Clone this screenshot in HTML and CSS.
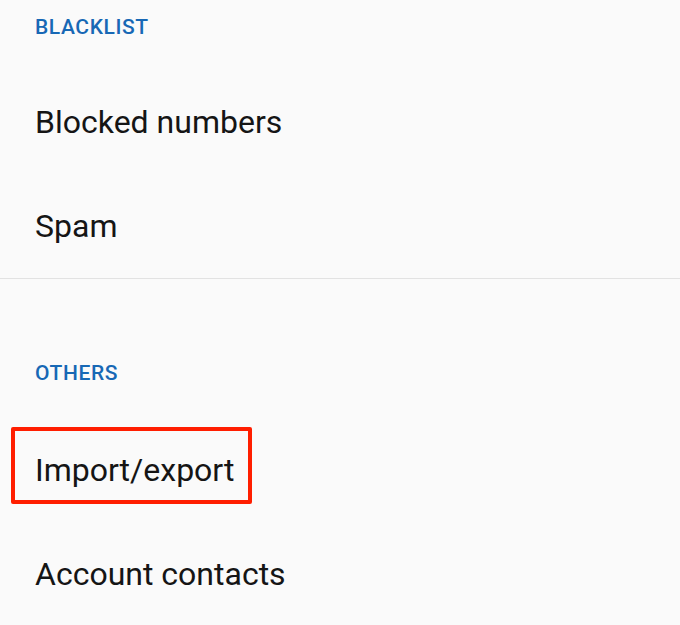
FILE: index.html
```html
<!DOCTYPE html>
<html>
	<head>
		<meta charset="UTF-8">
		<title>Contacts settings</title>
		<link rel="stylesheet" href="styles.css">
	</head>
	<body>
		<div class="section">
			<div class="section_title first">BLACKLIST</div>
			<div class="item">Blocked numbers</div>
			<div class="item">Spam</div>
		</div>
		<div class="section section_next">
			<div class="section_title">OTHERS</div>
			<div class="item marked">Import/export</div>
			<div class="item">Account contacts</div>
		</div>
	</body>
</html>
```

FILE: styles.css
```css
body {
	margin: 0;
	background-color: #fafafa;
	font-family: Roboto, "Noto Sans", sans-serif;
	overflow: hidden;
}

.section {
	border-bottom: 1px solid #e2e2e2;
}

.section_next {
	padding-top: 69px;
	border-bottom: none;
}

.section_title {
	padding-left: 35px;
	height: 50px;
	line-height: 50px;
	margin-bottom: 20px;
	font-size: 21px;
	font-weight: 500;
	letter-spacing: 0.6px;
	color: #1768b5;
}

.first {
	margin-top: 2px;
	margin-bottom: 18px;
}

.item {
	position: relative;
	padding-left: 35px;
	height: 104px;
	line-height: 104px;
	font-size: 32px;
	color: #151515;
}

.marked::after {
	content: "";
	position: absolute;
	left: 11px;
	top: 9px;
	width: 233px;
	height: 69px;
	border: 4px solid #ff1e00;
	border-radius: 2px;
}
```
